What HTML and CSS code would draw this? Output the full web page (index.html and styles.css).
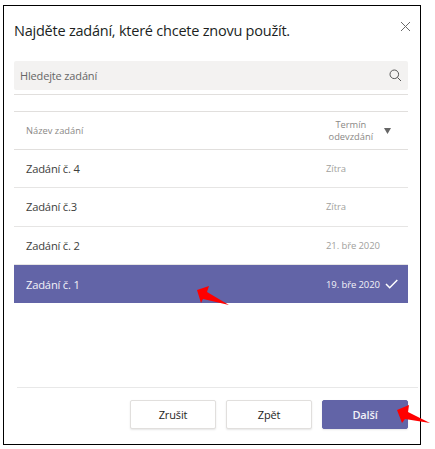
FILE: index.html
```html
<!DOCTYPE html>
<html lang="cs">
<head>
<meta charset="utf-8">
<title>Najděte zadání</title>
<link rel="stylesheet" href="styles.css">
</head>
<body>
<div class="dialog">
  <header class="head">
    <h1 class="title">Najděte zadání, které chcete znovu použít.</h1>
    <svg class="close" width="11" height="11" viewBox="0 0 11 11"><path d="M1 1l9 9M10 1l-9 9" stroke="#6a6a6a" stroke-width="1" fill="none"/></svg>
  </header>
  <div class="search">
    <span>Hledejte zadání</span>
    <svg width="13" height="13" viewBox="0 0 13 13"><circle cx="5.300" cy="5.300" r="4.300" stroke="#555" fill="none"/><path d="M8.400 8.400l3.600 3.600" stroke="#555" fill="none"/></svg>
  </div>
  <div class="spacer"></div>
  <div class="thead">
    <span>Název zadání</span>
    <div class="sort"><span class="sort-label">Termín<br>odevzdání</span><svg width="7" height="6" viewBox="0 0 7 6"><path d="M0 0h7L3.500 6z" fill="#666"/></svg></div>
  </div>
  <div class="row"><span class="name">Zadání č. 4</span><div class="meta"><span class="date">Zítra</span></div></div>
  <div class="row"><span class="name">Zadání č.3</span><div class="meta"><span class="date">Zítra</span></div></div>
  <div class="row"><span class="name">Zadání č. 2</span><div class="meta"><span class="date">21. bře 2020</span></div></div>
  <div class="row selected"><span class="name">Zadání č. 1</span><div class="meta"><span class="date">19. bře 2020</span><svg class="check" width="13" height="10" viewBox="0 0 13 10"><path d="M1 5l3.700 3.700L12.300 1" stroke="#fff" stroke-width="1.500" fill="none"/></svg></div></div>
  <footer class="foot">
    <button class="btn">Zrušit</button>
    <button class="btn">Zpět</button>
    <button class="btn primary">Další</button>
  </footer>
</div>
<svg class="arrow arrow-a" width="34" height="22" viewBox="0 0 34 22"><path d="M1 5L13 1 11 7 33 20 7 14 5 18z" fill="#f00"/></svg>
<svg class="arrow arrow-b" width="36" height="21" viewBox="0 0 36 21"><path d="M1 6L13 1 12 8 34 19 9 15 6 19z" fill="#f00"/></svg>
</body>
</html>
```
FILE: styles.css
```css
* { box-sizing: border-box; }
html, body { margin: 0; padding: 0; background: #fff; }
body { width: 435px; height: 449px; padding: 5px 0 0 3px; position: relative; font-family: "Open Sans", "Noto Sans", sans-serif; }
.dialog { width: 418px; height: 440px; border: 1px solid #000; background: #fff; padding: 0 12px 0 10px; color: #3a3a3a; }
.head { display: flex; justify-content: space-between; height: 55px; padding-top: 14px; }
.title { margin: 0; font-size: 14.500px; letter-spacing: -0.23px; line-height: 22px; font-weight: 400; color: #201f1e; }
.close { margin: 1px -3px 0 0; }
.search { height: 29px; background: #f3f2f1; border-radius: 2px; display: flex; align-items: center; justify-content: space-between; padding: 0 6px; font-size: 11px; letter-spacing: -0.15px; color: #666; }
.spacer { height: 17px; border-top: 1px solid #e1dfdd; margin-top: 4px; }
.thead { height: 39px; display: flex; justify-content: space-between; align-items: center; padding: 0 17px 0 12px; font-size: 9.300px; color: #8a8886; border-top: 1px solid #e1dfdd; border-bottom: 1px solid #e1dfdd; }
.sort { display: flex; align-items: center; gap: 11px; }
.sort-label { text-align: center; line-height: 12px; }
.row { height: 38.330px; display: flex; align-items: center; padding-left: 12px; font-size: 11.200px; letter-spacing: -0.2px; border-bottom: 1px solid #e6e5e4; }
.name { flex: 1; color: #403e3c; }
.meta { width: 82px; display: flex; align-items: center; gap: 5px; }
.date { font-size: 9.500px; letter-spacing: -0.1px; color: #a19f9d; }
.selected { background: #6264a7; border-bottom: 0; }
.selected .name, .selected .date { color: #f2f2f8; }
.foot { margin: 84px -10px 0 3px; padding: 12px 10px 0 0; border-top: 1px solid #e8e8e8; display: flex; justify-content: flex-end; gap: 10px; }
.btn { width: 86px; height: 29px; border: 1px solid #e1dfdd; border-radius: 2px; background: #fff; font: 500 11px "Open Sans", "Noto Sans", sans-serif; letter-spacing: -0.15px; color: #252423; box-shadow: 0 1px 2px rgba(0,0,0,.1); }
.primary { background: #6264a7; border-color: #6264a7; color: #f2f2f8; font-weight: 600; }
.arrow { position: absolute; }
.arrow-a { left: 196px; top: 285px; }
.arrow-b { left: 396px; top: 404px; }
```
